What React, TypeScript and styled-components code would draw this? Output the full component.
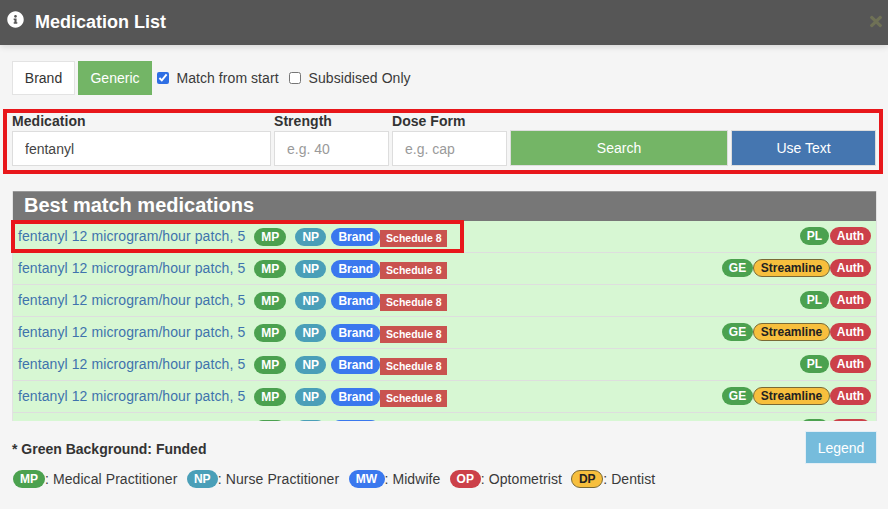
import React from "react";
import styled, { createGlobalStyle } from "styled-components";
import { FaInfoCircle, FaTimes } from "react-icons/fa";

const Global = createGlobalStyle`
  html, body { margin: 0; padding: 0; width: 888px; height: 509px; overflow: hidden; background: #f5f5f5; }
  body { font-family: "Liberation Sans", Arial, sans-serif; color: #333; }
  * { box-sizing: border-box; }
`;

const Modal = styled.div`
  width: 888px; height: 509px; display: flex; flex-direction: column; background: #f5f5f5; overflow: hidden;
`;
const Header = styled.header`
  height: 45px; flex: none; background: #565656; display: flex; align-items: center; padding: 0 6px 0 7px;
  box-shadow: 0 2px 6px rgba(0,0,0,.12); color: #fff; position: relative;
`;
const InfoIcon = styled(FaInfoCircle)`width: 17px; height: 17px; margin: -7px 11px 0 0; flex: none;`;
const Title = styled.h1`margin: 0; flex: 1; font-size: 18px; font-weight: 700; line-height: 45px;`;
const CloseIcon = styled(FaTimes)`width: 12px; height: 17px; color: #6f7156; margin-top: -3px;`;

const Body = styled.div`flex: 1; display: flex; flex-direction: column; padding: 16px 11px 0 12px; min-height: 0;`;
const Tabs = styled.div`display: flex; align-items: center; height: 34px;`;
const TabButton = styled.button<{ $active?: boolean }>`
  height: 34px; width: ${p => (p.$active ? 74 : 63)}px; margin-right: ${p => (p.$active ? 5 : 3)}px; padding: 0;
  font: 14px "Liberation Sans", Arial, sans-serif;
  border: 1px solid ${p => (p.$active ? "#72b564" : "#e3e3e3")};
  background: ${p => (p.$active ? "#73b566" : "#fff")}; color: ${p => (p.$active ? "#fff" : "#333")};
`;
const Check = styled.label`display: flex; align-items: center; font-size: 14px; color: #3a3a3a; margin-right: 10.5px; letter-spacing: .06px;
  input { width: 12px; height: 12px; margin: 0 7.5px 0 0; accent-color: #2f6fe4; }`;

const SearchBox = styled.form`
  margin: 14px -6px 0 -9px; height: 65px; border: 4px solid #e8171b; padding: 0 0 4px 5px;
  display: flex; align-items: flex-end; gap: 3px;
`;
const Field = styled.div<{ $w: number }>`width: ${p => p.$w}px; flex: none; display: flex; flex-direction: column;`;
const FieldLabel = styled.label`font-size: 14px; font-weight: 700; color: #333; line-height: 16px; margin-bottom: 2px; letter-spacing: .05px;`;
const TextInput = styled.input`
  height: 35px; width: 100%; border: 1px solid #ddd; background: #fff; padding: 0 12px; font: 14px "Liberation Sans", Arial, sans-serif; color: #444;
  &::placeholder { color: #9a9a9a; }
`;
const ActionButton = styled.button<{ $bg: string; $w: number }>`
  width: ${p => p.$w}px; height: 36px; flex: none; margin-bottom: 0; padding: 0; border: 1px solid #ddd; background: ${p => p.$bg}; background-clip: padding-box; color: #fff;
  font: 14px "Liberation Sans", Arial, sans-serif;
`;

const Panel = styled.section`margin-top: 17px; height: 230px; flex: none; overflow-x: visible; overflow-y: clip; background: #d7f7d3; border-left: 1px solid #e2e2e2; border-right: 1px solid #e2e2e2;`;
const PanelHead = styled.h2`margin: 0; height: 30px; background: #777; color: #fff; font-size: 20px; line-height: 26px; font-weight: 700; padding-left: 11px; border-top: 1px solid #999;`;
const Row = styled.div`position: relative; height: 32px; display: flex; align-items: center; padding: 0 5px 1px 5px; border-bottom: 1.5px solid #dedede;`;
const MedLink = styled.a`font-size: 14px; color: #3f73ad; white-space: nowrap; margin-right: 9px; letter-spacing: .09px;`;
const Pill = styled.span<{ $bg: string; $w?: number; $dark?: boolean; $gap?: number; $drop?: boolean }>`
  display: inline-flex; align-items: center; justify-content: center; height: 18px; flex: none;
  width: ${p => (p.$w ? p.$w + "px" : "auto")}; margin-right: ${p => p.$gap ?? 0}px;
  margin-top: ${p => (p.$drop ? 2 : 0)}px;
  border-radius: 9px; background: ${p => p.$bg}; color: ${p => (p.$dark ? "#222" : "#fff")};
  font-size: 12px; font-weight: 700; ${p => p.$dark ? "border: 1px solid #7a6a35;" : ""}
`;
const ScheduleTag = styled.span`
  display: inline-flex; align-items: center; justify-content: center; width: 67px; height: 17px; margin-top: 4px;
  background: #c9534f; color: #fff; font-size: 10.5px; font-weight: 700;
`;
const Spacer = styled.div`flex: 1;`;
const Highlight = styled.div`position: absolute; left: -2px; top: -1px; width: 453px; height: 33px; border: 4px solid #e8171b; pointer-events: none;`;

const Footer = styled.div`position: relative; flex: 1; padding-top: 20px;`;
const Note = styled.div`font-size: 14px; font-weight: 700; color: #333; line-height: 16px;`;
const Key = styled.div`margin-top: 13px; padding-left: 1px; display: flex; align-items: center; font-size: 14px; color: #3a3a3a;`;
const KeyItem = styled.span`margin-right: 9.3px; white-space: nowrap; letter-spacing: .08px;`;
const LegendButton = styled.button`
  position: absolute; right: 0; top: 10px; width: 72px; height: 33px; border: 1px solid #e3eef5; padding: 0;
  background: #76bcdc; color: #fff; font: 14px "Liberation Sans", Arial, sans-serif;
`;

const GREEN = "#4ba14f", TEAL = "#4a9fb8", BLUE = "#3a78ee", RED = "#cc4049", YELLOW = "#f7bf3d";

const rows = [false, true, false, true, false, true, false];

export default function App() {
  return (
    <Modal>
      <Global />
      <Header>
        <InfoIcon />
        <Title>Medication List</Title>
        <CloseIcon preserveAspectRatio="none" />
      </Header>
      <Body>
        <Tabs>
          <TabButton>Brand</TabButton>
          <TabButton $active>Generic</TabButton>
          <Check><input type="checkbox" defaultChecked />Match from start</Check>
          <Check><input type="checkbox" />Subsidised Only</Check>
        </Tabs>
        <SearchBox>
          <Field $w={259}><FieldLabel>Medication</FieldLabel><TextInput defaultValue="fentanyl" /></Field>
          <Field $w={115}><FieldLabel>Strength</FieldLabel><TextInput placeholder="e.g. 40" /></Field>
          <Field $w={115}><FieldLabel>Dose Form</FieldLabel><TextInput placeholder="e.g. cap" /></Field>
          <ActionButton type="button" $bg="#74b566" $w={218}>Search</ActionButton>
          <ActionButton type="button" $bg="#4576b0" $w={145}>Use Text</ActionButton>
        </SearchBox>
        <Panel>
          <PanelHead>Best match medications</PanelHead>
          {rows.map((ge, i) => (
            <Row key={i}>
              <MedLink>fentanyl 12 microgram/hour patch, 5</MedLink>
              <Pill $bg={GREEN} $w={32} $gap={9} $drop>MP</Pill>
              <Pill $bg={TEAL} $w={31} $gap={5} $drop>NP</Pill>
              <Pill $bg={BLUE} $w={49} $drop>Brand</Pill>
              <ScheduleTag>Schedule 8</ScheduleTag>
              <Spacer />
              {ge ? <Pill $bg={GREEN} $w={31}>GE</Pill> : <Pill $bg={GREEN} $w={29} $gap={1}>PL</Pill>}
              {ge && <Pill $bg={YELLOW} $w={77} $dark>Streamline</Pill>}
              <Pill $bg={RED} $w={41}>Auth</Pill>
              {i === 0 && <Highlight />}
            </Row>
          ))}
        </Panel>
        <Footer>
          <Note>* Green Background: Funded</Note>
          <Key>
            <Pill $bg={GREEN} $w={32}>MP</Pill><KeyItem>: Medical Practitioner</KeyItem>
            <Pill $bg={TEAL} $w={31}>NP</Pill><KeyItem>: Nurse Practitioner</KeyItem>
            <Pill $bg={BLUE} $w={36}>MW</Pill><KeyItem>: Midwife</KeyItem>
            <Pill $bg={RED} $w={31}>OP</Pill><KeyItem>: Optometrist</KeyItem>
            <Pill $bg={YELLOW} $w={32} $dark>DP</Pill><KeyItem>: Dentist</KeyItem>
          </Key>
          <LegendButton type="button">Legend</LegendButton>
        </Footer>
      </Body>
    </Modal>
  );
}
